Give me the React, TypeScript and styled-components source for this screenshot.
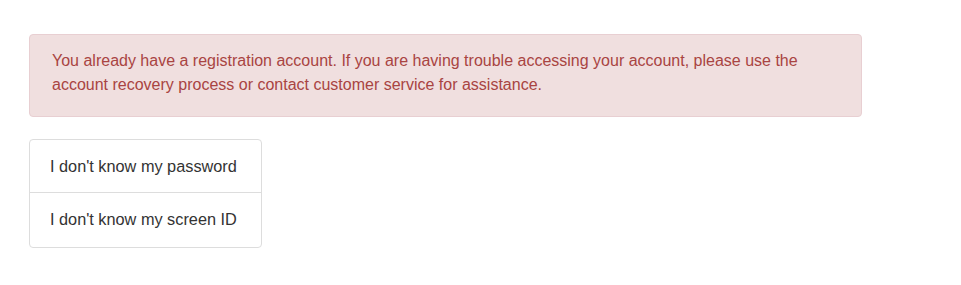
import React from "react";
import styled, { createGlobalStyle } from "styled-components";

const GlobalStyle = createGlobalStyle`
  body {
    margin: 0;
    background: #fff;
    font-family: "Liberation Sans", Arial, Helvetica, sans-serif;
  }
`;

const Page = styled.div`
  padding: 34px 99px 0 29px;
`;

const Alert = styled.div`
  box-sizing: border-box;
  width: 833px;
  padding: 14px 21px 19px 22px;
  margin-bottom: 22px;
  border: 1px solid #e8cfd2;
  border-radius: 4px;
  background: #f0dfdf;
  color: #a94442;
  font-size: 16px;
  line-height: 24px;
`;

const ListGroup = styled.div`
  box-sizing: border-box;
  width: 233px;
  border: 1px solid #ddd;
  border-radius: 4px;
  background: #fff;
`;

const ListItem = styled.a`
  display: block;
  padding: 14px 20px 14px 20px;
  color: #333;
  font-size: 16.3px;
  line-height: 24px;
  text-decoration: none;
  cursor: pointer;

  & + & {
    border-top: 1px solid #ddd;
    padding-bottom: 16px;
  }
`;

export default function App() {
  return (
    <>
      <GlobalStyle />
      <Page>
        <Alert>
          You already have a registration account. If you are having trouble
          accessing your account, please use the
          <br />
          account recovery process or contact customer service for assistance.
        </Alert>
        <ListGroup>
          <ListItem>I don't know my password</ListItem>
          <ListItem>I don't know my screen ID</ListItem>
        </ListGroup>
      </Page>
    </>
  );
}
